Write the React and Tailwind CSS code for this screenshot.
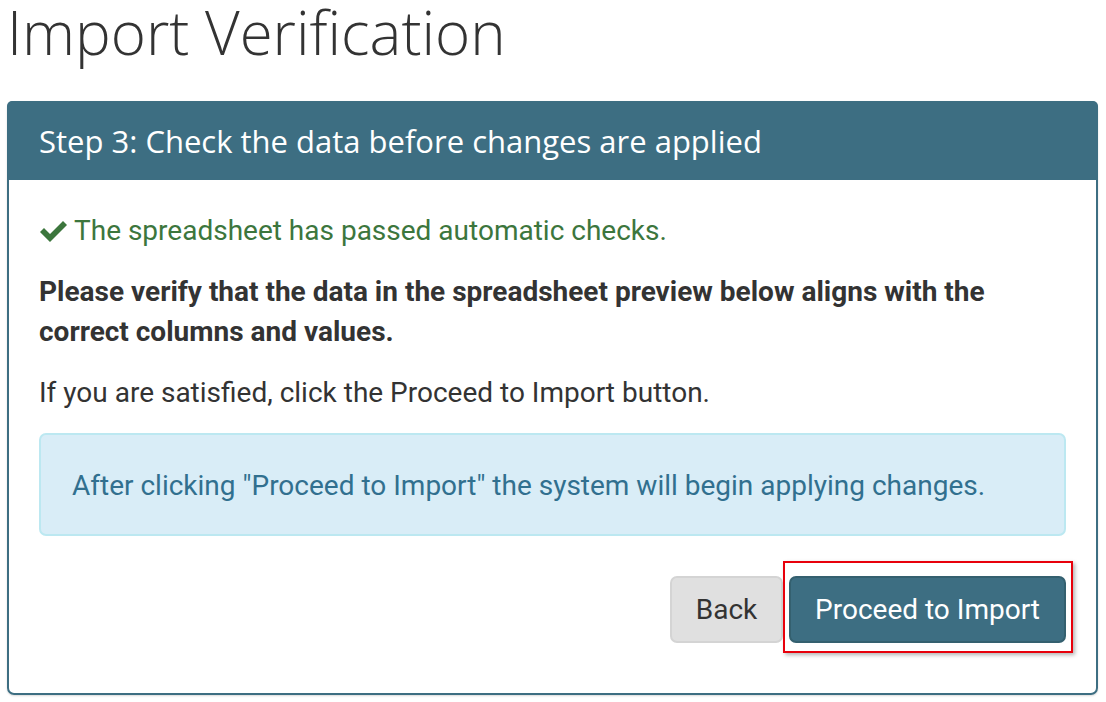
import React from "react";

export default function App() {
  return (
    <div className="w-[1106px] h-[702px] overflow-hidden bg-white" style={{ fontFamily: "Roboto, 'Liberation Sans', sans-serif" }}>
      <h1 className="pl-[7px] -mt-[8px] h-[109px] text-[60px] leading-[80px] font-light text-[#333333]" style={{ fontFamily: "'Open Sans', sans-serif" }}>
        Import Verification
      </h1>
      <div className="ml-[7px] w-[1091px] h-[594px] border-2 border-[#3d6e82] rounded-[7px] shadow-[0_1px_2px_rgba(0,0,0,0.15)]">
        <div className="h-[79px] bg-[#3d6e82] rounded-t-[5px] flex items-center pl-[31px] text-white text-[31px] -mt-[2px] -mx-[2px]" style={{ fontFamily: "'Open Sans', sans-serif" }}>
          <span className="ml-[1px] mt-[2px]">Step 3: Check the data before changes are applied</span>
        </div>
        <div className="px-[30px] pt-[33px]">
          <p className="flex items-center text-[28px] leading-[36px] text-[#3c763d]">
            <svg width="29" height="24" viewBox="0 0 29 24" className="mr-[6px]">
              <path d="M1 13 L5 9 L11 15 L24 2 L28 6 L11 23 Z" fill="#3c763d" />
            </svg>
            The spreadsheet has passed automatic checks.
          </p>
          <p className="mt-[23px] text-[28px] leading-[40px] font-bold text-[#333333]">
            Please verify that the data in the spreadsheet preview below aligns with the correct columns and values.
          </p>
          <p className="mt-[21px] text-[28px] leading-[40px] text-[#333333]">
            If you are satisfied, click the Proceed to Import button.
          </p>
          <div className="mt-[20px] h-[103px] bg-[#d9edf7] border-2 border-[#bce8f1] rounded-[7px] flex items-center pl-[31px] pt-[2px] text-[28px] text-[#31708f]">
            After clicking "Proceed to Import" the system will begin applying changes.
          </div>
          <div className="mt-[40px] flex justify-end items-start">
            <button className="h-[67px] w-[113px] bg-[#e0e0e0] border-2 border-[#d4d4d4] rounded-[7px] text-[28px] text-[#333333]">
              Back
            </button>
            <div className="border-2 border-[#e8000b] shadow-[2px_2px_4px_rgba(0,0,0,0.3)] pl-[4px] pr-[5px] pt-[13px] pb-[8px] -mr-[7px] -mt-[15px]">
              <button className="h-[67px] w-[277px] bg-[#3d6e82] border-2 border-[#34606f] rounded-[7px] text-[28px] text-white block">
                Proceed to Import
              </button>
            </div>
          </div>
        </div>
      </div>
    </div>
  );
}
